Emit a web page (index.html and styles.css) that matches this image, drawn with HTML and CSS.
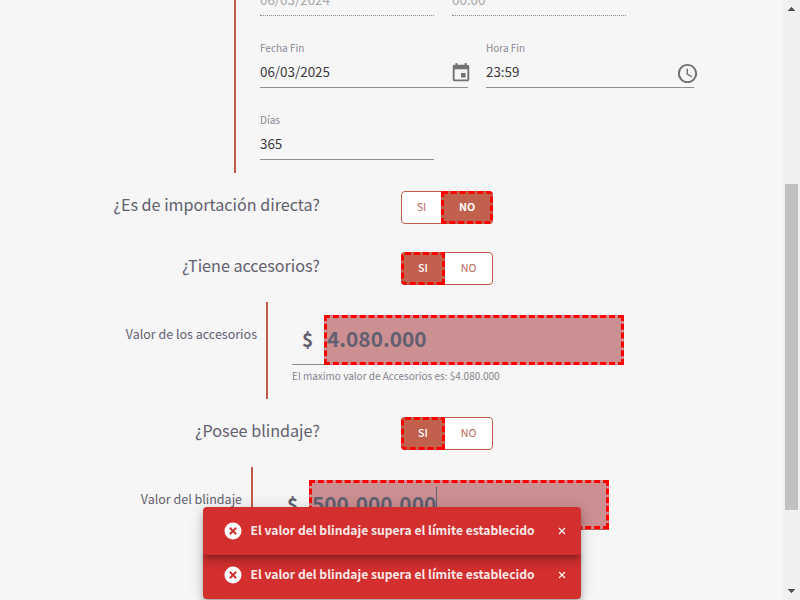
FILE: index.html
```html
<!DOCTYPE html>
<html lang="es">
<head>
<meta charset="utf-8">
<title>Cotización</title>
<link rel="stylesheet" href="styles.css">
</head>
<body>
<div class="window">
  <main class="page">
    <section class="period">
      <div class="fields fields-start">
        <div class="field disabled"><span class="value"><span>06/03/2024</span></span></div>
        <div class="field disabled"><span class="value"><span>00:00</span></span></div>
      </div>
      <div class="fields">
        <div class="field wide">
          <label>Fecha Fin</label>
          <span class="value"><span>06/03/2025</span>
            <svg class="icon" viewBox="0 0 24 24"><path d="M17 12h-5v5h5v-5zM16 1v2H8V1H6v2H5c-1.110 0-1.990.9-1.990 2L3 19a2 2 0 0 0 2 2h14c1.100 0 2-.9 2-2V5c0-1.100-.9-2-2-2h-1V1h-2zm3 18H5V8h14v11z"/></svg>
          </span>
        </div>
        <div class="field wide">
          <label>Hora Fin</label>
          <span class="value"><span>23:59</span>
            <svg class="icon clock" viewBox="0 0 24 24"><path d="M11.990 2C6.470 2 2 6.480 2 12s4.470 10 9.990 10C17.520 22 22 17.520 22 12S17.520 2 11.990 2zM12 20a8 8 0 1 1 0-16 8 8 0 0 1 0 16zm.5-13H11v6l5.250 3.150.75-1.230-4.500-2.670V7z"/></svg>
          </span>
        </div>
      </div>
      <div class="fields">
        <div class="field"><label>Días</label><span class="value"><span>365</span></span></div>
      </div>
    </section>

    <div class="question">
      <p>¿Es de importación directa?</p>
      <div class="toggle"><button>SI</button><button class="on">NO</button></div>
    </div>
    <div class="question">
      <p>¿Tiene accesorios?</p>
      <div class="toggle"><button class="on">SI</button><button>NO</button></div>
    </div>
    <section class="amount">
      <p>Valor de los accesorios</p>
      <div class="amount-body">
        <div class="money"><span class="sign">$</span><div class="input">4.080.000</div></div>
        <small>El maximo valor de Accesorios es: $4.080.000</small>
      </div>
    </section>
    <div class="question">
      <p>¿Posee blindaje?</p>
      <div class="toggle"><button class="on">SI</button><button>NO</button></div>
    </div>
    <section class="amount armor">
      <p>Valor del blindaje</p>
      <div class="amount-body">
        <div class="money focused"><span class="sign">$</span><div class="input">500.000.000<i class="caret"></i></div></div>
      </div>
    </section>
  </main>
  <aside class="scrollbar">
    <svg viewBox="0 0 7 4"><path d="M3 0h1v1h1v1h1v1h1v1H0V3h1V2h1V1h1z"/></svg>
    <div class="thumb"></div>
    <svg class="down" viewBox="0 0 7 4"><path d="M3 0h1v1h1v1h1v1h1v1H0V3h1V2h1V1h1z"/></svg>
  </aside>
</div>
<div class="toasts">
  <div class="toast front">
    <svg class="error" viewBox="0 0 18 18"><circle cx="9" cy="9" r="8.500"/><path d="M5.800 5.800l6.400 6.400M12.200 5.800l-6.400 6.400"/></svg>
    <span>El valor del blindaje supera el límite establecido</span>
    <svg class="close" viewBox="0 0 8 8"><path d="M1 1l6 6M7 1L1 7"/></svg>
  </div>
  <div class="toast">
    <svg class="error" viewBox="0 0 18 18"><circle cx="9" cy="9" r="8.500"/><path d="M5.800 5.800l6.400 6.400M12.200 5.800l-6.400 6.400"/></svg>
    <span>El valor del blindaje supera el límite establecido</span>
    <svg class="close" viewBox="0 0 8 8"><path d="M1 1l6 6M7 1L1 7"/></svg>
  </div>
</div>
</body>
</html>
```
FILE: styles.css
```css
* { box-sizing: border-box; }
body {
  margin: 0;
  height: 600px;
  overflow: hidden;
  background: #f6f6f6;
  color: #625f70;
  font-family: "Noto Sans CJK SC", "Noto Sans", sans-serif;
}
p { margin: 0; }
.window { display: grid; grid-template-columns: 783px 17px; height: 600px; }
.page { height: 600px; overflow: hidden; }

.period {
  height: 173px;
  margin: 0 0 18px 234px;
  padding-left: 24px;
  border-left: 2px solid #c25c4a;
}
.fields { display: flex; gap: 18px; height: 72px; }
.fields-start { height: 16px; align-items: flex-end; }
.field { display: flex; flex-direction: column; justify-content: flex-end; width: 174px; height: 72px; border-bottom: 1px solid #8f8f8f; }
.wide { width: 208px; }
.field label { font-size: 10px; line-height: 14px; color: #8b8993; white-space: nowrap; }
.field .value {
  display: flex;
  justify-content: space-between;
  height: 32px;
  font-size: 13.400px;
  line-height: 32px;
  color: #3a393f;
}
.disabled { border-bottom: 1px dotted #8a8a8a; }
.field.disabled .value { color: #a9a8ac; height: 31px; line-height: 31px; }
.icon { width: 22px; height: 22px; margin: 7px -4px 0 0; fill: #717171; }
.clock { width: 23px; height: 23px; margin: 6.500px -4.500px 0 0; }

.question { display: flex; height: 33px; margin-bottom: 28px; }
.question p { width: 320px; margin-right: 81px; text-align: right; font-size: 16.150px; line-height: 27px; }
.toggle { display: flex; width: 92px; border: 1px solid #c25c4a; border-radius: 4px; background: #fff; }
.toggle button {
  flex: 1 1 auto;
  margin: 0;
  padding: 0 1px 2px 0;
  border: 0;
  background: none;
  color: #b5655a;
  font: 400 10.700px/29px "Noto Sans CJK SC", sans-serif;
}
.toggle .on + button { padding: 0 0 2px 1px; }
.toggle .on {
  flex: 0 0 44px;
  margin: -1px;
  padding: 0 0 2px;
  border: 3px dashed #f00;
  border-radius: 4px 0 0 4px;
  background: #c0604d;
  color: #fff;
  font-weight: 500;
  line-height: 25px;
}
.toggle .on:last-child { flex-basis: 52px; border-radius: 0 4px 4px 0; font-weight: 700; }

.amount { display: flex; height: 97px; margin: -11px 0 18px; }
.amount p { width: 257px; margin-right: 9px; padding-top: 22px; text-align: right; font-size: 12.500px; line-height: 20px; }
.amount-body { padding: 13px 0 0 24px; border-left: 2px solid #c25c4a; }
.armor p { width: 242px; }
.money { display: flex; width: 332px; height: 50px; background: linear-gradient(#8b8b8b, #8b8b8b) bottom / 100% 1px no-repeat; }
.sign { width: 31px; text-align: center; font-size: 19px; font-weight: 700; line-height: 47px; }
.input {
  display: flex;
  width: 300px;
  height: 50px;
  margin-left: 1px;
  border: 3px dashed #f00;
  background: #cc8f92;
  font-size: 20.850px;
  font-weight: 700;
  line-height: 40px;
}
.money.focused { background: linear-gradient(#c25c4a, #c25c4a) bottom / 100% 2px no-repeat; }
.focused .input { height: 49px; }
.caret { width: 1px; height: 26px; margin-top: 4px; background: #625f70; }
.amount small { display: block; margin-top: 2px; font-size: 10px; line-height: 18px; color: #85838d; }

.scrollbar { display: flex; flex-direction: column; align-items: center; background: #f0f0f0; }
.scrollbar svg { width: 7px; height: 4px; margin: 7px 0 173px; fill: #505050; flex: none; }
.scrollbar .thumb { width: 13px; height: 326px; background: #c1c1c1; }
.scrollbar .down { margin: 79px 0 0; transform: rotate(180deg); }

.toasts { position: absolute; left: 202.500px; top: 507px; width: 378px; }
.toast {
  position: relative;
  display: flex;
  align-items: center;
  height: 48px;
  margin-bottom: -4px;
  padding: 0 15px 0 21px;
  border-radius: 4px;
  background: #d32f2f;
  color: #fbe9e9;
  box-shadow: 0 3px 5px -1px rgba(0,0,0,.2), 0 6px 10px rgba(0,0,0,.14), 0 1px 18px rgba(0,0,0,.12);
  font-size: 12.150px;
  font-weight: 700;
  line-height: 18px;
  white-space: nowrap;
}
.front { z-index: 1; }
.toast span { flex: 1; padding-bottom: 2px; }
.error { width: 18px; height: 18px; margin-right: 9px; fill: #fff; }
.error path { stroke: #d32f2f; stroke-width: 2; }
.close { width: 8px; height: 8px; fill: none; stroke: #fff; stroke-width: 1.100; }
```
